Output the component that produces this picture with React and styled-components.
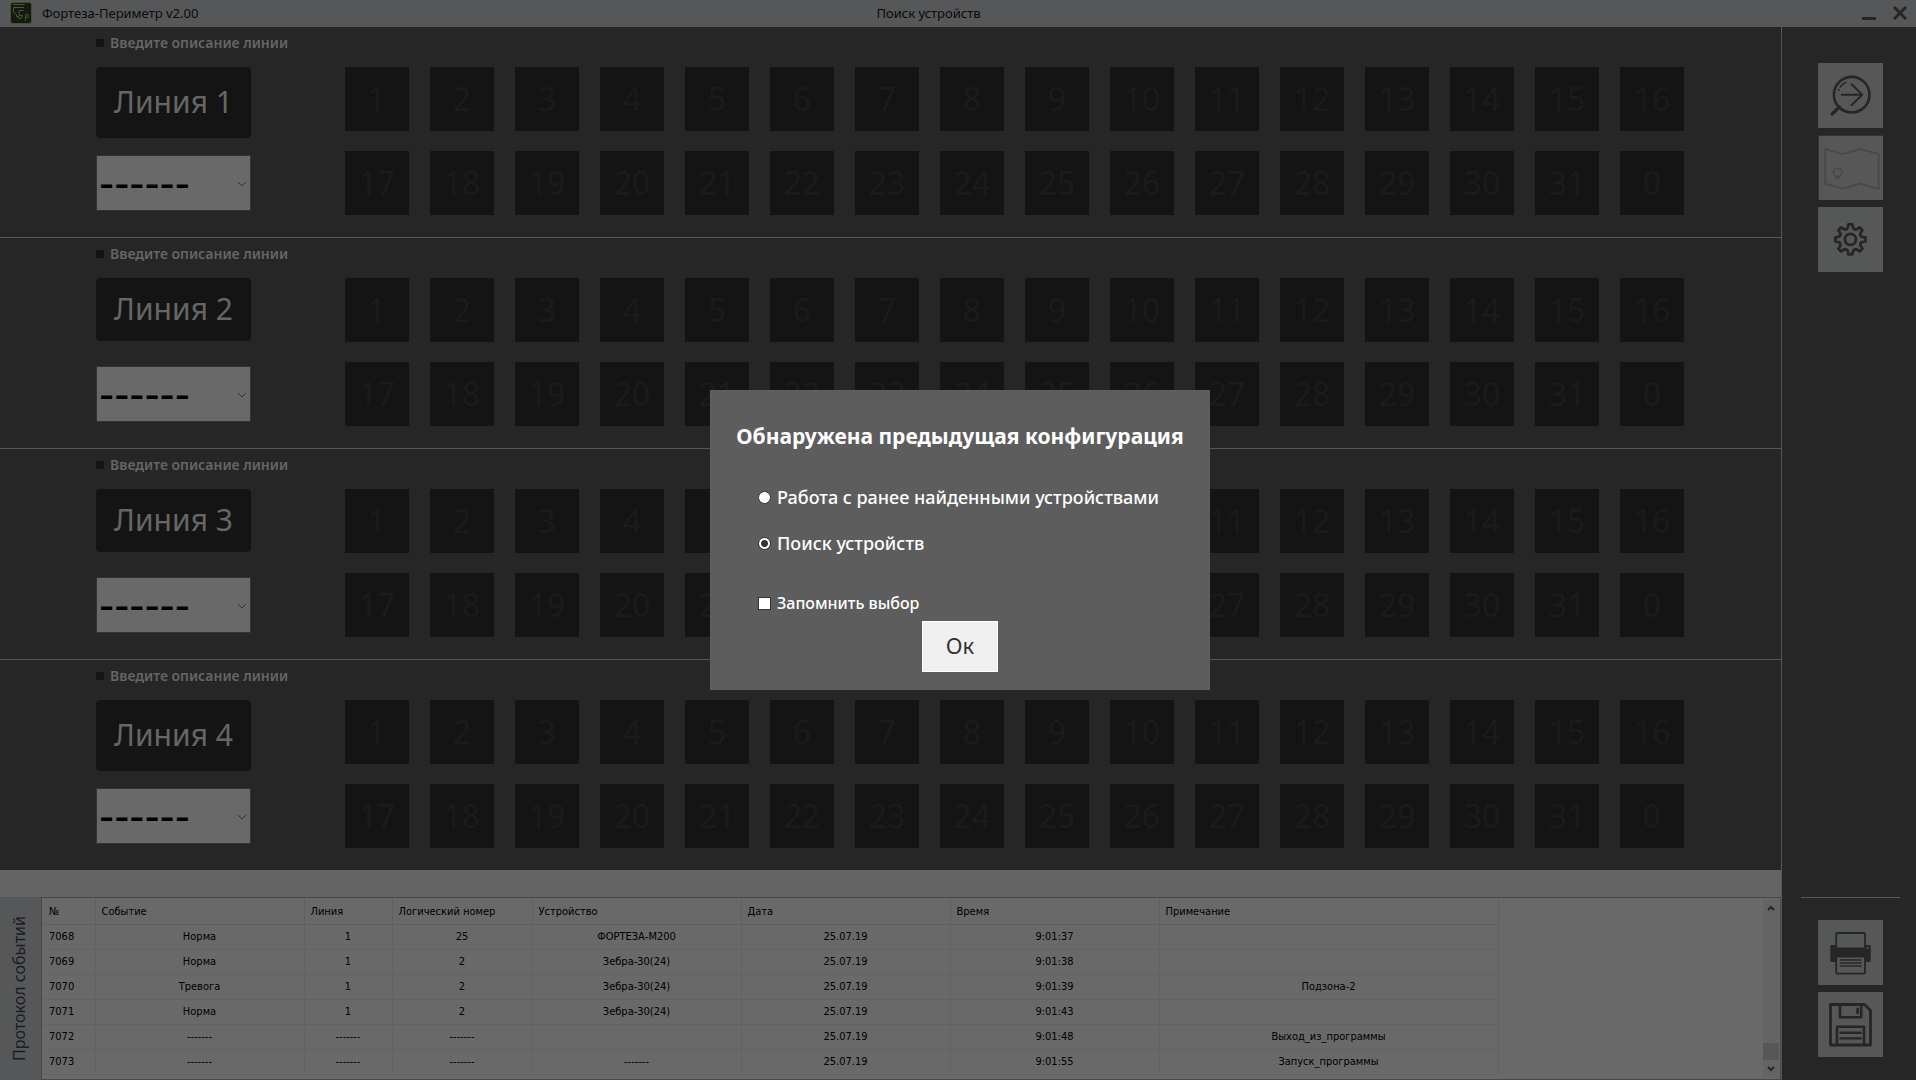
import React, { useState } from "react";
import styled, { createGlobalStyle } from "styled-components";

const uiFont = `"Noto Sans", "Open Sans", sans-serif`;
const gridFont = `"DejaVu Sans Condensed", "DejaVu Sans", sans-serif`;

const colorBg = `#262626`;
const colorTile = `#141414`;
const colorLine = `#575757`;
const colorIcon = `#262626`;

const lines = [
  { id: 1, tall: true },
  { id: 2, tall: false },
  { id: 3, tall: false },
  { id: 4, tall: true },
];

// 1..31 and the broadcast address 0 at the end
const devices = [...Array.from({ length: 31 }, (_, i) => i + 1), 0];

const columns = [
  { title: "№", width: 52 },
  { title: "Событие", width: 209 },
  { title: "Линия", width: 88 },
  { title: "Логический номер", width: 140 },
  { title: "Устройство", width: 209 },
  { title: "Дата", width: 209 },
  { title: "Время", width: 209 },
  { title: "Примечание", width: 339 },
];

const events = [
  ["7068", "Норма", "1", "25", "ФОРТЕЗА-М200", "25.07.19", "9:01:37", ""],
  ["7069", "Норма", "1", "2", "Зебра-30(24)", "25.07.19", "9:01:38", ""],
  ["7070", "Тревога", "1", "2", "Зебра-30(24)", "25.07.19", "9:01:39", "Подзона-2"],
  ["7071", "Норма", "1", "2", "Зебра-30(24)", "25.07.19", "9:01:43", ""],
  ["7072", "-------", "-------", "-------", "", "25.07.19", "9:01:48", "Выход_из_программы"],
  ["7073", "-------", "-------", "-------", "-------", "25.07.19", "9:01:55", "Запуск_программы"],
];

function gearPath(cx, cy, outer, inner) {
  const step = Math.PI / 4;
  const at = (r, a) => `${(cx + r * Math.sin(a)).toFixed(2)} ${(cy - r * Math.cos(a)).toFixed(2)}`;
  let d = "";
  for (let i = 0; i < 8; i++) {
    const a = i * step;
    d += `${i === 0 ? "M" : "L"}${at(inner, a - 0.22)} L${at(outer, a - 0.13)} `;
    d += `L${at(outer, a + 0.13)} L${at(inner, a + 0.22)} `;
    d += `Q${at(inner - 2, a + step / 2)} ${at(inner, a + step - 0.22)} `;
  }
  return d + "Z";
}

function Logo() {
  return (
    <svg width="22" height="22" viewBox="0 0 22 22" fill="none" aria-hidden="true">
      <rect x="0.5" y="0.5" width="21" height="21" rx="2.5" fill="#151815" stroke="#46521f" />
      <path d="M3 2.500H14.500M3.500 5.500H14M3.500 5.500V10.500L6.500 12.500V14.500H8.500V16.500H11L12.500 13.500H9V8.500H13.500" stroke="#4b5826" />
      <path d="M15.500 18.500V12.500H18V15.500H15.500" stroke="#35562a" />
    </svg>
  );
}

function SearchIcon() {
  return (
    <Glyph viewBox="0 0 65 65">
      <circle cx="33.700" cy="31.700" r="17.800" strokeWidth="2.600" />
      <path d="M21.500 44L14 51" strokeWidth="3.200" />
      <path d="M23.700 31.700H44M33.700 21.300L44.300 31.700L33.700 42" strokeWidth="2" />
      <path d="M20.800 27L21 26.500M22.300 24Q24.500 20.800 28 19.600" strokeWidth="1.600" />
    </Glyph>
  );
}

function MapIcon() {
  return (
    <Glyph viewBox="0 0 65 65" $color="#484848">
      <path d="M6.300 13.300L24 18.300L42 13.300L60.600 18.300V53.600L42 48.300L24 53.600L6.300 48.300Z" strokeWidth="1.800" />
      <circle cx="19" cy="37" r="4.300" strokeWidth="1.600" />
      <path d="M16.500 41L19 43.300L21.500 41" strokeWidth="1.600" />
    </Glyph>
  );
}

function GearIcon() {
  return (
    <Glyph viewBox="0 0 65 65">
      <path d={gearPath(32.4, 32.4, 15.2, 12)} strokeWidth="2.800" />
      <circle cx="32.400" cy="32.400" r="5.500" strokeWidth="2.800" />
    </Glyph>
  );
}

function PrintIcon() {
  return (
    <Glyph viewBox="0 0 65 65">
      <rect x="18.200" y="13" width="28.800" height="16" rx="1" strokeWidth="1.800" />
      <path d="M13.500 25H17.500V27.500H48V25H51.500Q52.700 25 52.700 26.200V41Q52.700 42 51.500 42H47.500V37.500H18.500V42H13.500Q12.300 42 12.300 41V26.200Q12.300 25 13.500 25Z" fill={colorIcon} stroke="none" />
      <path d="M18.200 37.500V52.500Q18.200 53.700 19.400 53.700H45.800Q47 53.700 47 52.500V37.500" strokeWidth="1.800" />
      <path d="M22.500 40H43M22.500 43H43M22.500 46H43" strokeWidth="1.600" />
      <circle cx="49.700" cy="28" r="0.900" fill="#575857" stroke="none" />
    </Glyph>
  );
}

function SaveIcon() {
  return (
    <Glyph viewBox="0 0 65 65">
      <path d="M12.500 12.500H46.500L52.500 18.500V53H12.500Z" strokeWidth="2.800" />
      <path d="M22 13V25.200H43.200V13" strokeWidth="2.600" />
      <path d="M39.600 17V20.800" strokeWidth="2.800" />
      <path d="M19 53V34.800H46V53" strokeWidth="2.600" />
      <path d="M22.500 40.700H42.700M22.500 46.400H42.700" strokeWidth="2.400" />
    </Glyph>
  );
}

function Chevron({ up }) {
  return (
    <svg width="8" height="6" viewBox="0 0 8 6" fill="none" stroke={colorIcon} strokeWidth="2" aria-hidden="true">
      <path d={up ? "M1 5L4 2L7 5" : "M1 1L4 4L7 1"} />
    </svg>
  );
}

function Line({ id, tall }) {
  return (
    <LineRow>
      <Description>
        <Bullet />
        Введите описание линии
      </Description>
      <LineBody>
        <LineControls>
          <LineButton type="button" $tall={tall}>Линия {id}</LineButton>
          <SelectBox>
            <LineSelect aria-label={`Линия ${id}`}>
              <option>------</option>
            </LineSelect>
            <svg width="10" height="6" viewBox="0 0 10 6" fill="none" stroke="#333333" aria-hidden="true">
              <path d="M1 1L5 5L9 1" />
            </svg>
          </SelectBox>
        </LineControls>
        <DeviceGrid>
          {devices.map((number) => (
            <Device key={number} type="button">{number}</Device>
          ))}
        </DeviceGrid>
      </LineBody>
    </LineRow>
  );
}

function EventLog() {
  return (
    <LogPanel>
      <LogStrip />
      <LogBody>
        <LogTab>
          <span>Протокол событий</span>
        </LogTab>
        <LogView>
          <LogTable>
            <colgroup>
              {columns.map((column) => (
                <col key={column.title} style={{ width: column.width }} />
              ))}
            </colgroup>
            <thead>
              <tr>
                {columns.map((column) => (
                  <HeadCell key={column.title} scope="col">{column.title}</HeadCell>
                ))}
              </tr>
            </thead>
            <tbody>
              {events.map((row) => (
                <tr key={row[0]}>
                  {row.map((value, i) => (
                    <Cell key={i}>{value}</Cell>
                  ))}
                </tr>
              ))}
            </tbody>
          </LogTable>
          <ScrollBar>
            <Chevron up />
            <ScrollThumb />
            <Chevron />
          </ScrollBar>
        </LogView>
      </LogBody>
    </LogPanel>
  );
}

function ConfigDialog() {
  const [mode, setMode] = useState("search");
  const [remember, setRemember] = useState(false);

  return (
    <Overlay>
      <Dialog role="dialog" aria-labelledby="dialog-title">
        <DialogTitle id="dialog-title">Обнаружена предыдущая конфигурация</DialogTitle>
        <Options>
          <Option>
            <Radio name="mode" checked={mode === "previous"} onChange={() => setMode("previous")} />
            Работа с ранее найденными устройствами
          </Option>
          <Option>
            <Radio name="mode" checked={mode === "search"} onChange={() => setMode("search")} />
            Поиск устройств
          </Option>
        </Options>
        <Remember>
          <CheckBox checked={remember} onChange={(e) => setRemember(e.target.checked)} />
          Запомнить выбор
        </Remember>
        <OkButton type="button">Ок</OkButton>
      </Dialog>
    </Overlay>
  );
}

function App() {
  return (
    <Page>
      <GlobalStyle />
      <TitleBar>
        <AppName>
          <Logo />
          <span>Фортеза-Периметр v2.00</span>
        </AppName>
        <WindowTitle>Поиск устройств</WindowTitle>
        <WindowButtons>
          <WindowButton type="button" aria-label="Свернуть">
            <svg width="14" height="14" viewBox="0 0 14 14" stroke={colorIcon} strokeWidth="3">
              <path d="M0 12.500H14" />
            </svg>
          </WindowButton>
          <WindowButton type="button" aria-label="Закрыть">
            <svg width="14" height="14" viewBox="0 0 14 14" stroke={colorIcon} strokeWidth="3">
              <path d="M1 1L13 13M13 1L1 13" />
            </svg>
          </WindowButton>
        </WindowButtons>
      </TitleBar>
      <Workspace>
        <Main>
          {lines.map((line) => (
            <Line key={line.id} id={line.id} tall={line.tall} />
          ))}
          <EventLog />
        </Main>
        <SideBar>
          <ToolGroup>
            <Tool type="button" aria-label="Поиск устройств"><SearchIcon /></Tool>
            <Tool type="button" aria-label="План" disabled><MapIcon /></Tool>
            <Tool type="button" aria-label="Настройки" $color="#565857"><GearIcon /></Tool>
          </ToolGroup>
          <BottomTools>
            <Tool type="button" aria-label="Печать" $color="#565857"><PrintIcon /></Tool>
            <Tool type="button" aria-label="Сохранить" $color="#565759"><SaveIcon /></Tool>
          </BottomTools>
        </SideBar>
      </Workspace>
      <ConfigDialog />
    </Page>
  );
}

export default App;

const GlobalStyle = createGlobalStyle`
  * {
    box-sizing: border-box;
  }
  body {
    margin: 0;
    background: ${colorBg};
    font-family: ${uiFont};
  }
  button, select, input {
    margin: 0;
    font-family: inherit;
  }
`
const Page = styled.div`
  min-height: 100vh;
  display: flex;
  flex-direction: column;
`
const TitleBar = styled.header`
  display: grid;
  grid-template-columns: 1fr auto 1fr;
  align-items: center;
  height: 27px;
  padding: 0 9px 1px 10px;
  background: #565758;
  color: #0a0a0a;
  font-size: 13px;
`
const AppName = styled.div`
  display: flex;
  align-items: center;
  gap: 10px;
`
const WindowTitle = styled.div`
  padding-right: 60px;
`
const WindowButtons = styled.div`
  display: flex;
  justify-content: flex-end;
  gap: 17px;
`
const WindowButton = styled.button`
  display: flex;
  padding: 0;
  border: none;
  background: none;
`
const Workspace = styled.div`
  flex: 1;
  display: flex;
`
const Main = styled.main`
  flex: 1;
  min-width: 0;
  display: flex;
  flex-direction: column;
`


const LineRow = styled.section`
  padding: 4px 0 22px 96px;

  & + & {
    border-top: 1px solid ${colorLine};
  }
`
const Description = styled.div`
  display: flex;
  align-items: center;
  gap: 6px;
  height: 24px;
  padding-bottom: 1px;
  color: #656565;
  font-size: 14px;
  font-weight: 600;
`
const Bullet = styled.span`
  width: 8px;
  height: 8px;
  background: ${colorTile};
`
const LineBody = styled.div`
  display: flex;
  gap: 94px;
  padding-top: 12px;
`
const LineControls = styled.div`
  display: flex;
  flex-direction: column;
  justify-content: space-between;
  width: 155px;
  height: 144px;
`
const LineButton = styled.button`
  height: ${props => props.$tall ? 71 : 63}px;
  padding: 0 0 2px;
  border: none;
  border-radius: 4px;
  background: ${colorTile};
  color: #666666;
  font-size: 30px;
  line-height: 32px;
`
const SelectBox = styled.div`
  position: relative;

  svg {
    position: absolute;
    right: 4px;
    top: 26px;
    pointer-events: none;
  }
`
const LineSelect = styled.select`
  display: block;
  appearance: none;
  width: 100%;
  height: 56px;
  padding: 0 20px 0 2px;
  border: 1px solid #333333;
  border-radius: 0;
  background: #696969;
  color: #000000;
  font-family: "DejaVu Sans", sans-serif;
  font-size: 42px;
`
const DeviceGrid = styled.div`
  display: grid;
  grid-template-columns: repeat(16, 64px);
  gap: 20px 21px;
`
const Device = styled.button`
  height: 64px;
  padding: 0;
  border: none;
  background: ${colorTile};
  color: #1b1b1b;
  font-size: 32px;
  line-height: 32px;
`


const LogPanel = styled.section`
  flex: 1;
  display: flex;
  flex-direction: column;
`
const LogStrip = styled.div`
  height: 27px;
  background: #646464;
`
const LogBody = styled.div`
  flex: 1;
  display: flex;
`
const LogTab = styled.div`
  display: flex;
  align-items: center;
  justify-content: center;
  width: 41px;
  padding-right: 3px;
  background: #565758;
  color: #1c1c1c;
  font-size: 16px;

  span {
    writing-mode: vertical-rl;
    transform: rotate(180deg);
  }
`
const LogView = styled.div`
  flex: 1;
  display: flex;
  justify-content: space-between;
  padding: 1px;
  border: 1px solid #484848;
  background: #696969;
`
const LogTable = styled.table`
  table-layout: fixed;
  border-collapse: collapse;
  align-self: flex-start;
  width: 1455px;
  color: #000000;
  font-family: ${gridFont};
  font-size: 11px;
  line-height: 14px;
`
const HeadCell = styled.th`
  height: 25px;
  padding: 1px 6px 0;
  border-right: 1px solid #606060;
  border-bottom: 1px solid #606060;
  font-weight: 400;
  text-align: left;
`
const Cell = styled.td`
  height: 25px;
  padding: 0 6px;
  border-right: 1px solid #636363;
  border-bottom: 1px solid #636363;
  text-align: center;

  &:first-child {
    text-align: left;
  }
`
const ScrollBar = styled.div`
  display: flex;
  flex-direction: column;
  align-items: center;
  width: 16px;
  padding: 6px 0;
  background: #646464;
`
const ScrollThumb = styled.div`
  width: 100%;
  height: 17px;
  margin: auto 0 6px;
  background: #575757;
`


const SideBar = styled.aside`
  display: flex;
  flex-direction: column;
  justify-content: space-between;
  width: 135px;
  padding: 36px 16px 23px 19px;
  border-left: 1px solid ${colorLine};
`
const ToolGroup = styled.div`
  display: flex;
  flex-direction: column;
  align-items: center;
  gap: 7px;
`
const BottomTools = styled(ToolGroup)`
  padding-top: 22px;
  border-top: 1px solid ${colorLine};
`
const Tool = styled.button`
  width: 65px;
  height: 65px;
  padding: 0;
  border: none;
  background: ${props => props.$color || "#575757"};

  &:disabled {
    border-top: 1px solid #333333;
    border-left: 1px solid #333333;
  }
`
const Glyph = styled.svg`
  display: block;
  width: 100%;
  height: 100%;
  fill: none;
  stroke: ${props => props.$color || colorIcon};
  stroke-linecap: round;
  stroke-linejoin: round;
`


const Overlay = styled.div`
  position: fixed;
  inset: 0;
  display: flex;
  align-items: center;
  justify-content: center;
  padding-left: 4px;
`
const Dialog = styled.div`
  display: flex;
  flex-direction: column;
  width: 500px;
  padding: 28px 0 18px;
  background: #5d5d5d;
  color: #ffffff;
`
const DialogTitle = styled.h2`
  margin: 0;
  font-size: 21px;
  line-height: 36px;
  text-align: center;
  white-space: nowrap;
`
const Options = styled.div`
  display: flex;
  flex-direction: column;
  gap: 22px;
  padding: 31px 0 36px 48px;
`
const Option = styled.label`
  display: flex;
  align-items: center;
  gap: 6px;
  font-size: 18px;
  font-weight: 500;
  line-height: 24px;
  white-space: nowrap;
`
const Remember = styled(Option)`
  padding-left: 48px;
  font-size: 16px;
`
const Radio = styled.input.attrs({ type: "radio" })`
  appearance: none;
  width: 13px;
  height: 13px;
  border: 1px solid #333333;
  border-radius: 50%;
  background: #ffffff;

  &:checked {
    background: radial-gradient(circle, #333333 3px, #ffffff 4px);
  }
`
const CheckBox = styled.input.attrs({ type: "checkbox" })`
  appearance: none;
  width: 13px;
  height: 13px;
  border: 1px solid #333333;
  background: #ffffff;

  &:checked {
    background: #333333;
    box-shadow: inset 0 0 0 2px #ffffff;
  }
`
const OkButton = styled.button`
  align-self: center;
  width: 76px;
  height: 51px;
  margin-top: 6px;
  padding: 0 0 4px;
  border: 1px solid #ffffff;
  background: #f0f0f0;
  color: #333333;
  font-size: 22px;
`
